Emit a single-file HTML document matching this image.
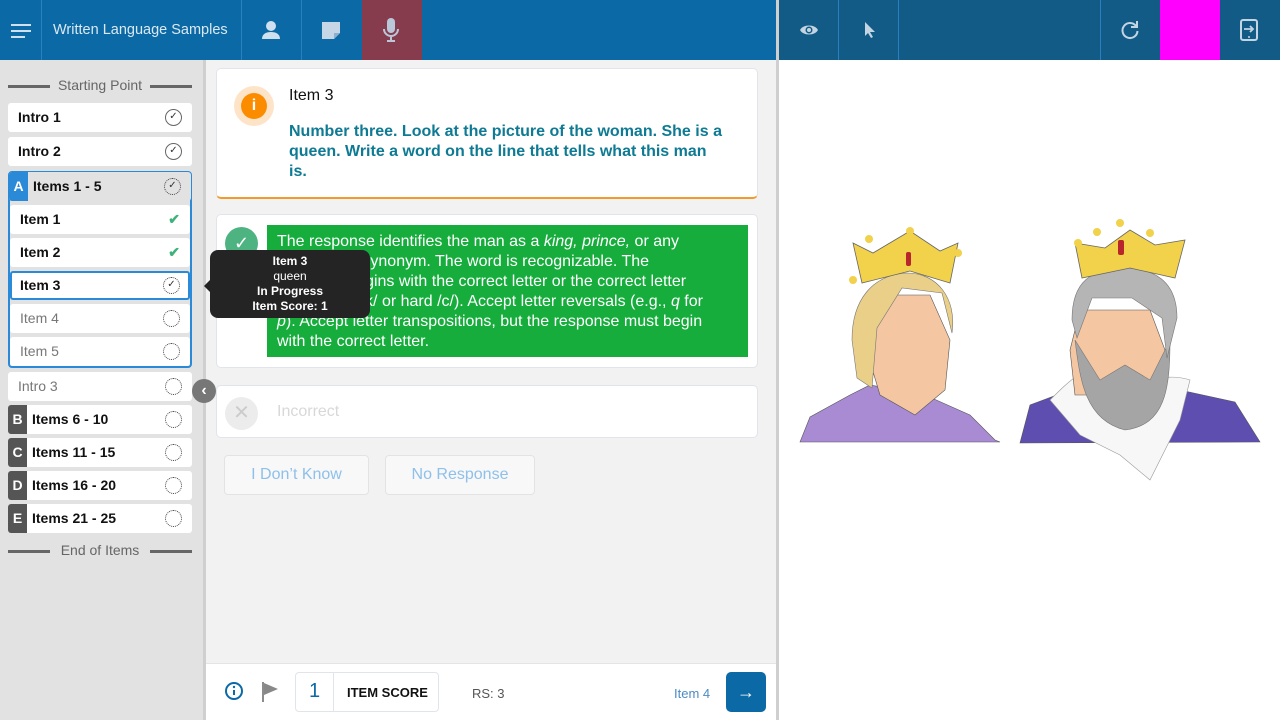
<!DOCTYPE html>
<html><head><meta charset="utf-8"><style>
*{box-sizing:border-box;margin:0;padding:0}
body{width:1280px;height:720px;overflow:hidden;font-family:"Liberation Sans",sans-serif;background:#fff;position:relative}
.abs{position:absolute}
.hdr{left:0;top:0;width:776px;height:60px;background:#0b6aa6}
.hdr2{left:779px;top:0;width:501px;height:60px;background:#135b87}
.vsep{position:absolute;top:0;width:1px;height:60px;background:#2a7fbf}
.side{left:0;top:60px;width:203px;height:660px;background:#e2e2e2}
.gut{left:203px;top:60px;width:3px;height:660px;background:#cfcfcf}
.gut2{left:776px;top:0;width:3px;height:720px;background:#cfcfcf}
.main{left:206px;top:60px;width:570px;height:603px;background:#f2f2f2}
.row{position:absolute;left:8px;width:184px;height:29px;background:#fff;border-radius:3px;font-size:14px;font-weight:bold;color:#111;padding-left:10px;line-height:29px}
.row.g{font-weight:normal;color:#777}
.ic{position:absolute;right:10px;top:6px;width:17px;height:17px;border-radius:50%;font-size:10px;line-height:14px;text-align:center;color:#333;font-weight:normal}
.solid{border:1.2px solid #666}
.dot{border:1.5px dotted #444}
.lt{position:absolute;left:0;top:0;width:19px;height:29px;background:#555;color:#fff;text-align:center;font-weight:bold;border-radius:3px 0 0 3px}
.sect{position:absolute;left:8px;width:184px;font-size:14px;color:#666;text-align:center}
.sect:before,.sect:after{content:"";position:absolute;top:8px;width:42px;height:3px;background:#666}
.sect:before{left:0}.sect:after{right:0}
.card{position:absolute;background:#fff;border:1px solid #e1e4ea;border-radius:5px}
.btn{position:absolute;top:455px;height:40px;background:#f8f8f8;border:1px solid #e3e3e3;border-radius:4px;color:#8ec0ea;font-size:16px;text-align:center;line-height:38px}
</style></head><body>
<div class="abs hdr">
<div class="vsep" style="left:41px"></div><div class="vsep" style="left:241px"></div><div class="vsep" style="left:301px"></div>
<div class="abs" style="left:11px;top:24px;width:20px;height:2px;background:#cfe0ee"></div>
<div class="abs" style="left:11px;top:30px;width:20px;height:2px;background:#cfe0ee"></div>
<div class="abs" style="left:11px;top:36px;width:14px;height:2px;background:#cfe0ee"></div>
<div class="abs" style="left:53px;top:22px;color:#dce8f2;font-size:14.5px">Written Language Samples</div>
<svg class="abs" style="left:261px;top:20px" width="20" height="20" viewBox="0 0 20 20"><circle cx="10" cy="6" r="5" fill="#cfe0ee"/><path d="M1 19c0-5 4-7 9-7s9 2 9 7z" fill="#cfe0ee"/></svg>
<svg class="abs" style="left:322px;top:22px" width="18" height="17" viewBox="0 0 18 17"><path d="M0 0h18v11l-6 6H0z" fill="#c5d7e6"/><path d="M12 17v-6h6" fill="#8fb0cc"/></svg>
<div class="abs" style="left:362px;top:0;width:60px;height:60px;background:#873c4e"></div>
<svg class="abs" style="left:382px;top:18px" width="18" height="24" viewBox="0 0 18 24"><rect x="5" y="0" width="8" height="15" rx="4" fill="#b9c7d8"/><path d="M2 11a7 7 0 0 0 14 0M9 18v5M5 23h8" stroke="#b9c7d8" stroke-width="2" fill="none"/></svg>
</div>
<div class="abs gut2"></div>
<div class="abs hdr2">
<div class="vsep" style="left:59px"></div><div class="vsep" style="left:119px"></div><div class="vsep" style="left:321px"></div>
<svg class="abs" style="left:21px;top:23px" width="18" height="14" viewBox="0 0 18 14"><path d="M0 7C3 1 15 1 18 7 15 13 3 13 0 7z" fill="#c3d4e2"/><circle cx="9" cy="7" r="3.5" fill="#135b87"/><circle cx="9" cy="7" r="2" fill="#c3d4e2"/></svg>
<svg class="abs" style="left:85px;top:22px" width="12" height="16" viewBox="0 0 12 16"><path d="M1 0v14l3-3 3 5 2-1-3-5h5z" fill="#c3d4e2"/></svg>
<svg class="abs" style="left:341px;top:20px" width="20" height="20" viewBox="0 0 20 20"><path d="M16 6A7.5 7.5 0 1 0 17.5 11" stroke="#c3d4e2" stroke-width="2" fill="none"/><path d="M17 1v6h-6" stroke="#c3d4e2" stroke-width="2" fill="none"/></svg>
<div class="abs" style="left:381px;top:0;width:60px;height:60px;background:#f0f"></div>
<svg class="abs" style="left:461px;top:19px" width="18" height="22" viewBox="0 0 18 22"><rect x="1" y="1" width="16" height="20" rx="2" stroke="#c3d4e2" stroke-width="2" fill="none"/><path d="M4 10h9M10 7l3 3-3 3" stroke="#c3d4e2" stroke-width="1.8" fill="none"/><circle cx="9" cy="18" r="1" fill="#c3d4e2"/></svg>
</div>

<div class="abs side"></div><div class="abs gut"></div><div class="abs main"></div>
<div class="sect" style="top:77px">Starting Point</div>
<div class="row" style="top:103px">Intro 1<div class="ic solid">✓</div></div>
<div class="row" style="top:137px">Intro 2<div class="ic solid">✓</div></div>
<div class="abs" style="left:8px;top:171px;width:184px;height:197px;border:2px solid #2a8ad8;border-radius:4px;background:#e2e2e2"></div>
<div class="row" style="top:172px;background:#e2e2e2;padding-left:24px;left:9px;width:182px">Items 1 - 5<div class="lt" style="background:#2a8ad8">A</div><div class="ic dot">✓</div></div>
<div class="row" style="top:205px;left:10px;width:180px">Item 1<span class="abs" style="right:10px;top:0;color:#3db37a">✔</span></div>
<div class="row" style="top:238px;left:10px;width:180px">Item 2<span class="abs" style="right:10px;top:0;color:#3db37a">✔</span></div>
<div class="row" style="top:271px;left:10px;width:180px;border:2px solid #2a8ad8;line-height:25px;padding-left:8px">Item 3<div class="ic dot" style="top:4px;right:8px">✓</div></div>
<div class="row g" style="top:304px;left:10px;width:180px">Item 4<div class="ic dot"></div></div>
<div class="row g" style="top:337px;left:10px;width:180px">Item 5<div class="ic dot"></div></div>
<div class="row g" style="top:372px">Intro 3<div class="ic dot"></div></div>
<div class="row" style="top:405px;padding-left:24px">Items 6 - 10<div class="lt">B</div><div class="ic dot"></div></div>
<div class="row" style="top:438px;padding-left:24px">Items 11 - 15<div class="lt">C</div><div class="ic dot"></div></div>
<div class="row" style="top:471px;padding-left:24px">Items 16 - 20<div class="lt">D</div><div class="ic dot"></div></div>
<div class="row" style="top:504px;padding-left:24px">Items 21 - 25<div class="lt">E</div><div class="ic dot"></div></div>
<div class="sect" style="top:542px">End of Items</div>

<div class="card" style="left:216px;top:68px;width:542px;height:131px;border-bottom:2px solid #f39a2a">
<div class="abs" style="left:17px;top:17px;width:40px;height:40px;border-radius:50%;background:#fde4c8"></div>
<div class="abs" style="left:24px;top:24px;width:26px;height:26px;border-radius:50%;background:#fb8c00;color:#fff;text-align:center;font-weight:bold;font-size:16px;line-height:26px">i</div>
<div class="abs" style="left:72px;top:18px;font-size:16px;color:#111">Item 3</div>
<div class="abs" style="left:72px;top:53px;width:460px;font-size:16px;font-weight:bold;color:#0e7a93;line-height:20px;white-space:nowrap">Number three. Look at the picture of the woman. She is a<br>queen. Write a word on the line that tells what this man<br>is.</div>
</div>
<div class="card" style="left:216px;top:214px;width:542px;height:154px">
<div class="abs" style="left:8px;top:12px;width:33px;height:33px;border-radius:50%;background:#4db380;color:#fff;text-align:center;font-size:18px;line-height:33px">✓</div>
<div class="abs" style="left:50px;top:10px;width:481px;height:132px;background:#16ad3c;color:#fff;font-size:16px;line-height:20px;padding:7px 10px;white-space:nowrap">The response identifies the man as a <i>king, prince,</i> or any<br>appropriate synonym. The word is recognizable. The<br>response begins with the correct letter or the correct letter<br>sound (soft /k/ or hard /c/). Accept letter reversals (e.g., <i>q</i> for<br><i>p</i>). Accept letter transpositions, but the response must begin<br>with the correct letter.</div>
</div>
<div class="card" style="left:216px;top:385px;width:542px;height:53px">
<div class="abs" style="left:8px;top:11px;width:33px;height:33px;border-radius:50%;background:#ececec;color:#ccc;text-align:center;font-size:20px;line-height:33px">✕</div>
<div class="abs" style="left:60px;top:17px;color:#d8d8d8;font-size:16px">Incorrect</div>
</div>
<div class="btn" style="left:224px;width:145px">I Don’t Know</div>
<div class="btn" style="left:385px;width:150px">No Response</div>

<div class="abs" style="left:192px;top:379px;width:24px;height:24px;border-radius:50%;background:#777;color:#fff;text-align:center;font-weight:bold;font-size:16px;line-height:24px">‹</div>
<div class="abs" style="left:204px;top:280px;width:0;height:0;border:6px solid transparent;border-right-color:#222;border-left:0"></div>
<div class="abs" style="left:210px;top:250px;width:160px;height:68px;background:#242424;border-radius:8px;color:#fff;font-size:12px;text-align:center;line-height:15px;padding-top:4px"><b>Item 3</b><br>queen<br><b>In Progress</b><br><b>Item Score: 1</b></div>

<div class="abs" style="left:206px;top:663px;width:570px;height:57px;background:#fff;border-top:1px solid #e4e4e4"></div>
<svg class="abs" style="left:224px;top:681px" width="20" height="20" viewBox="0 0 20 20"><circle cx="10" cy="10" r="8" stroke="#0b6aa6" stroke-width="2" fill="none"/><path d="M10 9v5" stroke="#0b6aa6" stroke-width="2"/><circle cx="10" cy="6" r="1.2" fill="#0b6aa6"/></svg>
<svg class="abs" style="left:261px;top:682px" width="18" height="20" viewBox="0 0 18 20"><path d="M2 0v20" stroke="#666" stroke-width="1.5"/><path d="M3 1l14 6-14 6z" fill="#888"/></svg>
<div class="abs" style="left:295px;top:672px;width:144px;height:40px;border:1px solid #e1e4ea;border-radius:4px"><div class="abs" style="left:37px;top:0;width:1px;height:38px;background:#e1e4ea"></div><div class="abs" style="left:0;top:7px;width:37px;text-align:center;font-size:20px;color:#0b6aa6">1</div><div class="abs" style="left:51px;top:12px;font-size:13px;font-weight:bold;color:#111">ITEM SCORE</div></div>
<div class="abs" style="left:472px;top:686px;font-size:13px;color:#555">RS: 3</div>
<div class="abs" style="left:674px;top:686px;font-size:13px;color:#4a8cc4">Item 4</div>
<div class="abs" style="left:726px;top:672px;width:40px;height:40px;border-radius:5px;background:#0b6aa6;color:#fff;text-align:center;font-size:18px;line-height:40px">→</div>

<svg class="abs" style="left:779px;top:60px" width="501" height="660" viewBox="779 60 501 660">
<path d="M800 442l10-25 40-22 20-10 55 10 45 20 25 25 5 2z" fill="#a98bd4" stroke="#555" stroke-width="0.6"/>
<path d="M880 295l50 0 20 45-5 50-30 25-35-20-15-50z" fill="#f4c6a2" stroke="#555" stroke-width="0.6"/>
<path d="M852 340c0-40 20-65 55-67 30 0 50 25 45 60l-10-40-40-5-25 40 -5 60-15-10z" fill="#e9cf88" stroke="#777" stroke-width="0.6"/>
<path d="M862 283l-9-40 20 10 37-22 30 20 18-8-8 40-40-12z" fill="#f2d14b" stroke="#666" stroke-width="0.8"/>
<circle cx="869" cy="239" r="4" fill="#f2d14b"/><circle cx="910" cy="231" r="4" fill="#f2d14b"/><circle cx="958" cy="253" r="4" fill="#f2d14b"/><circle cx="853" cy="280" r="4" fill="#f2d14b"/>
<rect x="906" y="252" width="5" height="14" rx="2" fill="#b8252c"/>
<path d="M1020 443l10-38 40-15 110 0 55 12 25 40z" fill="#5d4eb0" stroke="#555" stroke-width="0.6"/>
<path d="M1050 400c20-20 40-40 50-20 40 10 60-10 90 0l-10 40-30 60-30 -25-40-20z" fill="#f7f7f7" stroke="#999" stroke-width="0.6"/>
<path d="M1080 310h70l15 40-10 45-80 0-5-45z" fill="#f4c6a2" stroke="#555" stroke-width="0.6"/>
<path d="M1075 340c5 40 10 80 50 90 40-5 45-40 45-90l-20 40-25-15-25 15z" fill="#a5a5a5" stroke="#777" stroke-width="0.6"/>
<path d="M1072 320c0-40 20-50 50-52 35 0 55 15 55 50l-10 40-5-40-30-20-40 0-15 40z" fill="#b5b5b5" stroke="#777" stroke-width="0.6"/>
<path d="M1082 278l-7-35 30 5 25-18 25 15 30-5-10 38-45-10z" fill="#f2d14b" stroke="#666" stroke-width="0.8"/>
<circle cx="1078" cy="243" r="4" fill="#f2d14b"/><circle cx="1120" cy="223" r="4" fill="#f2d14b"/><circle cx="1177" cy="251" r="4" fill="#f2d14b"/><circle cx="1097" cy="232" r="4" fill="#f2d14b"/><circle cx="1150" cy="233" r="4" fill="#f2d14b"/>
<rect x="1118" y="240" width="6" height="15" rx="2" fill="#b8252c"/>
</svg>
</body></html>
